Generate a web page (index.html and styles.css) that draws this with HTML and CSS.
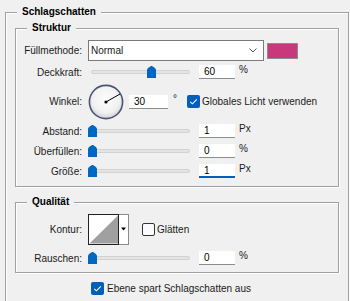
FILE: index.html
```html
<!DOCTYPE html>
<html lang="de">
<head>
<meta charset="utf-8">
<link rel="stylesheet" href="styles.css">
</head>
<body>
<section class="group outer">
  <div class="title">Schlagschatten</div>

  <div class="group sub">
    <div class="title">Struktur</div>
    <div class="form struktur">
      <span class="lbl">Füllmethode:</span>
      <div class="ctl">
        <div class="select">
          <span>Normal</span>
          <svg class="chev" width="8" height="5" viewBox="0 0 8 5"><path d="M0.5 0.5 L4 4 L7.5 0.5" fill="none" stroke="#555" stroke-width="1"/></svg>
        </div>
        <div class="swatch"></div>
      </div>

      <span class="lbl">Deckkraft:</span>
      <div class="ctl">
        <div class="slider"><div class="track"></div><svg class="thumb" style="left:59px" width="9" height="12" viewBox="0 0 9 12"><path d="M4.5 0 C5.8 0 9 2.6 9 4 V12 H0 V4 C0 2.6 3.2 0 4.5 0 Z" fill="#0067c0"/></svg></div>
        <div class="num">60</div><span class="unit">%</span>
      </div>

      <span class="lbl">Winkel:</span>
      <div class="ctl">
        <svg class="dial" width="36" height="36" viewBox="0 0 36 36">
          <defs>
            <radialGradient id="dg" cx="50%" cy="42%" r="58%">
              <stop offset="0" stop-color="#fdfdfd"/>
              <stop offset="0.7" stop-color="#f1f1f1"/>
              <stop offset="1" stop-color="#d2d2d6"/>
            </radialGradient>
          </defs>
          <circle cx="18" cy="18" r="16.6" fill="url(#dg)" stroke="#4a5575" stroke-width="1.6"/>
          <line x1="18" y1="18" x2="32" y2="10" stroke="#000" stroke-width="1"/>
          <circle cx="18" cy="18" r="1.6" fill="#000"/>
        </svg>
        <div class="num angle">30</div><span class="deg">°</span>
        <span class="check on"><svg width="13" height="13" viewBox="0 0 13 13"><path d="M3.3 6.8 L5.4 8.8 L9.8 4.3" fill="none" stroke="#fff" stroke-width="1.1"/></svg></span>
        <span class="chk-text">Globales Licht verwenden</span>
      </div>

      <span class="lbl">Abstand:</span>
      <div class="ctl">
        <div class="slider"><div class="track"></div><svg class="thumb" style="left:0px" width="9" height="12" viewBox="0 0 9 12"><path d="M4.5 0 C5.8 0 9 2.6 9 4 V12 H0 V4 C0 2.6 3.2 0 4.5 0 Z" fill="#0067c0"/></svg></div>
        <div class="num">1</div><span class="unit">Px</span>
      </div>

      <span class="lbl">Überfüllen:</span>
      <div class="ctl">
        <div class="slider"><div class="track"></div><svg class="thumb" style="left:0px" width="9" height="12" viewBox="0 0 9 12"><path d="M4.5 0 C5.8 0 9 2.6 9 4 V12 H0 V4 C0 2.6 3.2 0 4.5 0 Z" fill="#0067c0"/></svg></div>
        <div class="num">0</div><span class="unit">%</span>
      </div>

      <span class="lbl">Größe:</span>
      <div class="ctl">
        <div class="slider"><div class="track"></div><svg class="thumb" style="left:0px" width="9" height="12" viewBox="0 0 9 12"><path d="M4.5 0 C5.8 0 9 2.6 9 4 V12 H0 V4 C0 2.6 3.2 0 4.5 0 Z" fill="#0067c0"/></svg></div>
        <div class="num focus">1</div><span class="unit">Px</span>
      </div>
    </div>
  </div>

  <div class="group sub quali">
    <div class="title">Qualität</div>
    <div class="form qualitaet">
      <span class="lbl">Kontur:</span>
      <div class="ctl">
        <svg class="kontur" width="41" height="31" viewBox="0 0 41 31">
          <rect x="0.5" y="0.5" width="40" height="30" fill="#fff" stroke="#8a8a8a"/>
          <rect x="0.5" y="0.5" width="30" height="30" fill="#fff" stroke="#222"/>
          <polygon points="1.5,29.5 30,1.5 30,29.5" fill="#a0a0a0"/>
          <polygon points="33,13.5 38,13.5 35.5,16.5" fill="#000"/>
        </svg>
        <span class="check off"></span>
        <span class="chk-text">Glätten</span>
      </div>

      <span class="lbl">Rauschen:</span>
      <div class="ctl">
        <div class="slider"><div class="track"></div><svg class="thumb" style="left:0px" width="9" height="12" viewBox="0 0 9 12"><path d="M4.5 0 C5.8 0 9 2.6 9 4 V12 H0 V4 C0 2.6 3.2 0 4.5 0 Z" fill="#0067c0"/></svg></div>
        <div class="num">0</div><span class="unit">%</span>
      </div>
    </div>
  </div>

  <div class="bottom-row">
    <span class="check on"><svg width="13" height="13" viewBox="0 0 13 13"><path d="M3.3 6.8 L5.4 8.8 L9.8 4.3" fill="none" stroke="#fff" stroke-width="1.1"/></svg></span>
    <span class="chk-text">Ebene spart Schlagschatten aus</span>
  </div>
</section>
</body>
</html>
```
FILE: styles.css
```css
* { box-sizing: border-box; }
html, body { margin: 0; padding: 0; }
html { overflow: hidden; }
body {
  background: #f0f0f0;
  width: 350px;
  height: 301px;
  overflow: hidden;
  font-family: "Liberation Sans", Arial, sans-serif;
  font-size: 10px;
  color: #1a1a1a;
}
.group {
  border: 1px solid #a0a0a0;
  box-shadow: 1px 1px 0 #fff, inset 1px 1px 0 #fff;
}
.outer {
  margin: 12px 0 0 5px;
  width: 344px;
  border-bottom: none;
  padding-bottom: 6px;
}
.title {
  width: max-content;
  margin: -8px 0 0 11px;
  padding: 0 5px;
  line-height: 14px;
  font-weight: bold;
  color: #000;
  background: #f0f0f0;
}
.sub { margin: 9px 9px 0 9px; }
.quali { margin-top: 15px; }

.form {
  display: grid;
  grid-template-columns: 66px 1fr;
  column-gap: 6px;
  align-items: center;
}
.struktur {
  grid-template-rows: 21px 18px 37px 18px 18px 18px;
  row-gap: 2px;
  padding: 5px 0 6px 0;
}
.qualitaet {
  grid-template-rows: 31px 18px;
  row-gap: 4px;
  padding: 5px 0 5px 0;
}
.lbl { text-align: right; white-space: nowrap; }
.ctl { display: flex; align-items: center; height: 100%; }

.select {
  width: 176px;
  height: 21px;
  background: #fff;
  border: 1px solid #7a7a7a;
  display: flex;
  align-items: center;
  justify-content: space-between;
  padding: 0 6px 0 2px;
}
.swatch {
  width: 31px;
  height: 16px;
  margin-left: 3px;
  background: #c8387a;
  border: 1px solid #8c8c8c;
}

.slider {
  position: relative;
  width: 102px;
  height: 12px;
  display: flex;
  align-items: center;
}
.track {
  width: 100%;
  height: 4px;
  margin-left: 3px;
  background: #e4e4e4;
  border: 1px solid #d2d2d2;
  border-radius: 2px;
}
.thumb { position: absolute; top: 0; }

.num {
  width: 36px;
  height: 14px;
  margin-left: 9px;
  padding-left: 5px;
  line-height: 14px;
  background: #fff;
  border-bottom: 1px solid #8c8c8c;
  color: #000;
}
.num.focus { border-bottom: 2px solid #005fb8; }
.num.angle { width: 39px; margin-left: 5px; }
.unit { margin: 0 0 5px 4px; }
.deg { margin: 0 0 6px 5px; }

.check {
  width: 13px;
  height: 13px;
  border-radius: 2px;
  flex: none;
  display: block;
}
.check svg { display: block; }
.check.on { background: #005fb8; }
.check.off { border: 1px solid #333; background: #fbfbfb; }
.ctl .check.on { margin-left: 10px; }
.ctl .check.off { margin-left: 13px; }
.chk-text { margin-left: 2px; white-space: nowrap; }

.kontur { display: block; }
.dial { display: block; }

.bottom-row {
  display: flex;
  align-items: center;
  height: 14px;
  margin: 8px 0 0 85px;
}
.bottom-row .chk-text { margin-left: 3px; }
```
